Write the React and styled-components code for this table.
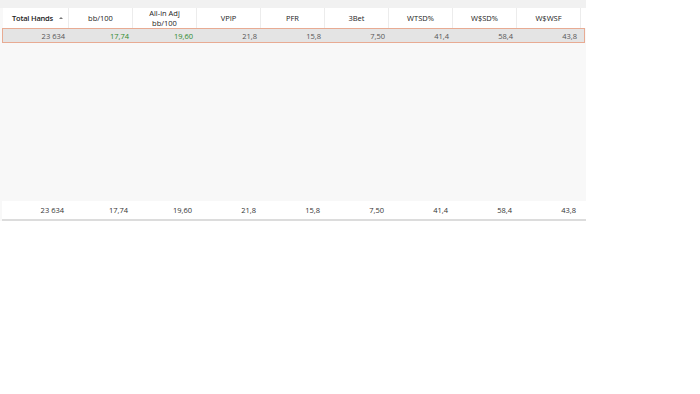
import React from "react";
import styled, { createGlobalStyle } from "styled-components";

const Global = createGlobalStyle`
  html, body { margin: 0; padding: 0; background: #ffffff; }
  body { font-family: "Open Sans", "Noto Sans", sans-serif; }
`;

const Panel = styled.div`
  width: 586px;
  height: 221px;
  background: #f8f8f8;
  display: flex;
  flex-direction: column;
  box-sizing: border-box;
`;

const TopStrip = styled.div`
  height: 8px;
  background: #f1f1f1;
`;

const Grid = styled.div`
  display: grid;
  grid-template-columns: 66px repeat(8, 64px);
  margin-left: 3px;
`;

const Header = styled(Grid)`
  background: #ffffff;
  height: 20px;
`;

const HeadCell = styled.div`
  display: flex;
  align-items: center;
  justify-content: ${(p) => (p.$left ? "flex-start" : "center")};
  padding-left: ${(p) => (p.$left ? "9px" : "0")};
  border-right: 1px solid #ececec;
  font-size: 7.5px;
  line-height: 10px;
  color: #222;
  text-align: center;
  font-weight: ${(p) => (p.$bold ? 600 : 400)};
  letter-spacing: ${(p) => (p.$bold ? "-0.2px" : "0")};
  box-sizing: border-box;
  white-space: nowrap;
`;

const SortArrow = styled.span`
  margin-left: 6px;
  width: 0;
  height: 0;
  border-left: 2px solid transparent;
  border-right: 2px solid transparent;
  border-bottom: 2.5px solid #777;
`;

const SelectedRow = styled(Grid)`
  margin-left: 2px;
  width: 583px;
  height: 15px;
  background: #e4e4e4;
  border: 1px solid #e8ab93;
  box-sizing: border-box;
`;

const Cell = styled.div`
  display: flex;
  align-items: center;
  justify-content: flex-end;
  padding-right: 4px;
  font-size: 7.5px;
  color: ${(p) => (p.$green ? "#2e8b2e" : "#555")};
  box-sizing: border-box;
`;

const Body = styled.div`
  flex: 1;
`;

const Footer = styled(Grid)`
  margin-left: 2px;
  width: 584px;
  height: 20px;
  background: #ffffff;
  border-bottom: 2px solid #dcdcdc;
  box-sizing: border-box;
`;

const FootCell = styled(Cell)`
  color: #333;
`;

const headers = [
  { label: "Total Hands", bold: true, left: true, sort: true },
  { label: "bb/100" },
  { label: ["All-in Adj", "bb/100"] },
  { label: "VPIP" },
  { label: "PFR" },
  { label: "3Bet" },
  { label: "WTSD%" },
  { label: "W$SD%" },
  { label: "W$WSF" },
];

const values = ["23 634", "17,74", "19,60", "21,8", "15,8", "7,50", "41,4", "58,4", "43,8"];

export default function App() {
  return (
    <>
      <Global />
      <Panel>
        <TopStrip />
        <Header>
          {headers.map((h, i) => (
            <HeadCell key={i} $bold={h.bold} $left={h.left}>
              {Array.isArray(h.label) ? (
                <span>
                  {h.label[0]}
                  <br />
                  {h.label[1]}
                </span>
              ) : (
                h.label
              )}
              {h.sort && <SortArrow />}
            </HeadCell>
          ))}
        </Header>
        <SelectedRow>
          {values.map((v, i) => (
            <Cell key={i} $green={i === 1 || i === 2}>
              {v}
            </Cell>
          ))}
        </SelectedRow>
        <Body />
        <Footer>
          {values.map((v, i) => (
            <FootCell key={i}>{v}</FootCell>
          ))}
        </Footer>
      </Panel>
    </>
  );
}
